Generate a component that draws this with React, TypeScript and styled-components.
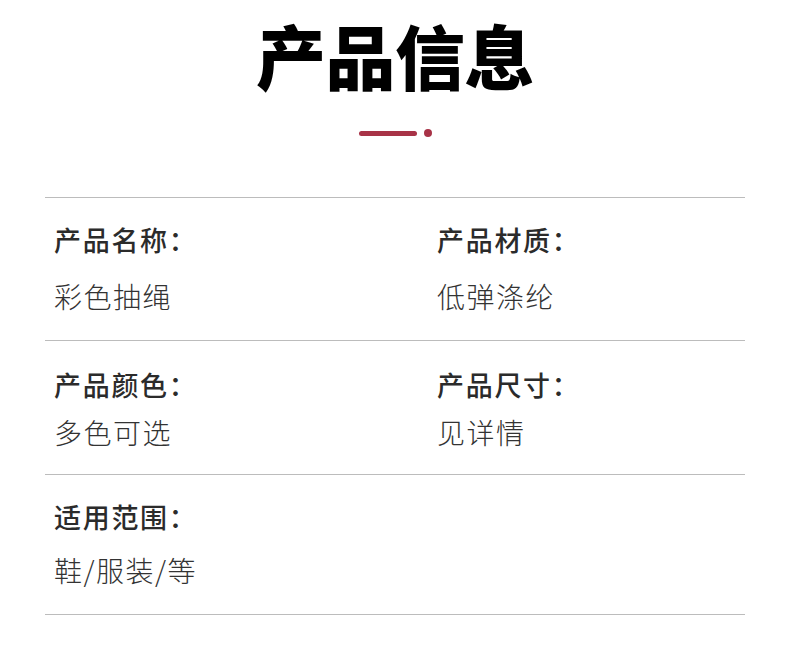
import React from "react";
import styled, { createGlobalStyle } from "styled-components";

const GlobalStyle = createGlobalStyle`
  html, body { margin: 0; padding: 0; background: #ffffff; }
  body { font-family: "Noto Sans CJK SC", "Noto Sans", sans-serif; }
`;

const Page = styled.div`
  width: 790px;
  height: 662px;
  background: #fff;
  display: flex;
  flex-direction: column;
  align-items: stretch;
  overflow: hidden;
`;

const Title = styled.h1`
  margin: 20px 0 0;
  font-size: 70px;
  line-height: 70px;
  font-weight: 900;
  color: #000;
  text-align: center;
  letter-spacing: -0.5px;
`;

const Accent = styled.div`
  display: flex;
  justify-content: center;
  align-items: center;
  gap: 7px;
  margin-top: 39px;
  height: 8px;
`;

const AccentBar = styled.span`
  width: 58px;
  height: 5px;
  border-radius: 3px;
  background: #a83347;
`;

const AccentDot = styled.span`
  width: 8px;
  height: 8px;
  border-radius: 50%;
  background: #a83347;
`;

const Table = styled.div`
  margin: 60px 45px 0;
  border-top: 1px solid #bcbcbc;
`;

const Row = styled.div<{ $height: number; $pad: number }>`
  box-sizing: border-box;
  height: ${(p) => p.$height}px;
  padding: ${(p) => p.$pad}px 0 0 9px;
  border-bottom: 1px solid #bcbcbc;
  display: grid;
  grid-template-columns: 383px 1fr;
`;

const Cell = styled.div`
  display: flex;
  flex-direction: column;
`;

const Label = styled.div`
  font-size: 27px;
  line-height: 28px;
  font-weight: 500;
  color: #2b2b2b;
  letter-spacing: 1.7px;
`;

const Value = styled.div<{ $gap: number }>`
  margin-top: ${(p) => p.$gap}px;
  font-size: 28px;
  line-height: 28px;
  font-weight: 300;
  color: #333;
  letter-spacing: 1.5px;
`;

type Item = { label: string; value: string };
type RowData = { height: number; pad: number; gap: number; items: Item[] };

const rows: RowData[] = [
  {
    height: 143,
    pad: 28,
    gap: 28,
    items: [
      { label: "产品名称：", value: "彩色抽绳" },
      { label: "产品材质：", value: "低弹涤纶" },
    ],
  },
  {
    height: 134,
    pad: 30,
    gap: 19,
    items: [
      { label: "产品颜色：", value: "多色可选" },
      { label: "产品尺寸：", value: "见详情" },
    ],
  },
  {
    height: 140,
    pad: 28,
    gap: 25,
    items: [{ label: "适用范围：", value: "鞋/服装/等" }],
  },
];

export default function App() {
  return (
    <>
      <GlobalStyle />
      <Page>
        <Title>产品信息</Title>
        <Accent>
          <AccentBar />
          <AccentDot />
        </Accent>
        <Table>
          {rows.map((r, i) => (
            <Row key={i} $height={r.height} $pad={r.pad}>
              {r.items.map((it) => (
                <Cell key={it.label}>
                  <Label>{it.label}</Label>
                  <Value $gap={r.gap}>{it.value}</Value>
                </Cell>
              ))}
            </Row>
          ))}
        </Table>
      </Page>
    </>
  );
}
